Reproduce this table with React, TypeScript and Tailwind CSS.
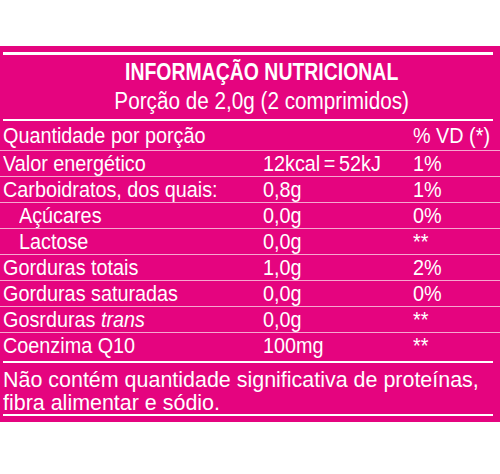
import type { ReactNode } from "react";

const font = {
  fontFamily: "'Liberation Sans', Arial, sans-serif",
};

const rows = [
  { label: "Valor energético", value: "12kcal=52kJ", vd: "1%" },
  { label: "Carboidratos, dos quais:", value: "0,8g", vd: "1%" },
  { label: "Açúcares", value: "0,0g", vd: "0%", indent: true },
  { label: "Lactose", value: "0,0g", vd: "**", indent: true },
  { label: "Gorduras totais", value: "1,0g", vd: "2%" },
  { label: "Gorduras saturadas", value: "0,0g", vd: "0%" },
  { label: "Gosrduras", italic: "trans", value: "0,0g", vd: "**" },
];

const squeeze = {
  normal: "scale-x-[0.9]",
  wide: "scale-x-[0.975]",
};

// condensed look: squeeze the text horizontally
const T = ({ children, w = "normal" }: { children: ReactNode; w?: keyof typeof squeeze }) => (
  <span className={`inline-block whitespace-nowrap origin-left ${squeeze[w]}`}>{children}</span>
);

const ThickLine = () => <div className="mx-[3px] h-[2px] w-[490px] bg-white" />;

export default function App() {
  return (
    <div className="w-[500px] h-[474px] bg-white pt-[46px] text-white" style={font}>
      <div className="bg-[#e5047f] h-[376px] pt-[6px]">
        <div className="mx-[3px] h-[3px] w-[490px] bg-white" />

        <div className="h-[64px] pt-[3px] pl-[24px] flex flex-col items-center">
          <div className="text-[24px] leading-[28px] font-bold whitespace-nowrap scale-x-[0.81]">
            INFORMAÇÃO NUTRICIONAL
          </div>
          <div className="text-[23px] leading-[28px] mt-[1px] whitespace-nowrap scale-x-[0.9]">
            Porção de 2,0g (2 comprimidos)
          </div>
        </div>

        <ThickLine />

        <div className="text-[22px] leading-[26px]">
          <div className="grid grid-cols-[260px_150px_1fr] pl-[3px] h-[30px] pt-[2px] border-b border-[#f7a6cf]">
            <div><T>Quantidade por porção</T></div>
            <div />
            <div><T>% VD (*)</T></div>
          </div>

          {rows.map((r) => (
            <div
              key={r.label}
              className="grid grid-cols-[260px_150px_1fr] pl-[3px] h-[26px] border-b border-[#f7a6cf]"
            >
              <div className={r.indent ? "pl-[16px]" : ""}>
                <T>
                  {r.label}
                  {r.italic && <i> {r.italic}</i>}
                </T>
              </div>
              <div>
                {r.value === "12kcal=52kJ" ? (
                  <T>12kcal<span className="px-[4px]">=</span>52kJ</T>
                ) : (
                  <T>{r.value}</T>
                )}
              </div>
              <div><T>{r.vd}</T></div>
            </div>
          ))}

          <div className="grid grid-cols-[260px_150px_1fr] pl-[3px] h-[28px]">
            <div><T>Coenzima Q10</T></div>
            <div><T>100mg</T></div>
            <div><T>**</T></div>
          </div>
        </div>

        <ThickLine />

        <div className="h-[51px] pt-[5px] pl-[3px] text-[22px] leading-[23px] flex flex-col">
          <T w="wide">Não contém quantidade significativa de proteínas,</T>
          <T w="wide">fibra alimentar e sódio.</T>
        </div>

        <ThickLine />
      </div>
    </div>
  );
}
